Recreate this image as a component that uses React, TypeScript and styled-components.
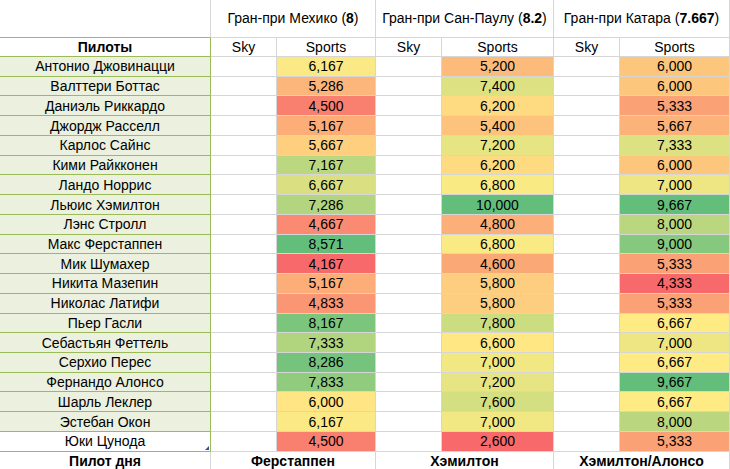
import styled, { createGlobalStyle } from "styled-components";

const GlobalStyle = createGlobalStyle`
  html, body {
    margin: 0;
    padding: 0;
    background: #ffffff;
  }
  body {
    font-family: "Liberation Sans", Arial, sans-serif;
    color: #000;
  }
`;

const GRID = "#d6d6d6";
const GREEN_LINE = "#9bbb59";
const NAME_FILL = "#ebf1de";

type Row = [string, number, number, number];

const drivers: Row[] = [
  ["Антонио Джовинацци", 6.167, 5.2, 6.0],
  ["Валттери Боттас", 5.286, 7.4, 6.0],
  ["Даниэль Риккардо", 4.5, 6.2, 5.333],
  ["Джордж Расселл", 5.167, 5.4, 5.667],
  ["Карлос Сайнс", 5.667, 7.2, 7.333],
  ["Кими Райкконен", 7.167, 6.2, 6.0],
  ["Ландо Норрис", 6.667, 6.8, 7.0],
  ["Льюис Хэмилтон", 7.286, 10.0, 9.667],
  ["Лэнс Стролл", 4.667, 4.8, 8.0],
  ["Макс Ферстаппен", 8.571, 6.8, 9.0],
  ["Мик Шумахер", 4.167, 4.6, 5.333],
  ["Никита Мазепин", 5.167, 5.8, 4.333],
  ["Николас Латифи", 4.833, 5.8, 5.333],
  ["Пьер Гасли", 8.167, 7.8, 6.667],
  ["Себастьян Феттель", 7.333, 6.6, 7.0],
  ["Серхио Перес", 8.286, 7.0, 6.667],
  ["Фернандо Алонсо", 7.833, 7.2, 9.667],
  ["Шарль Леклер", 6.0, 7.6, 6.667],
  ["Эстебан Окон", 6.167, 7.0, 8.0],
  ["Юки Цунода", 4.5, 2.6, 5.333],
];

const races = [
  { name: "Гран-при Мехико", score: "8", winner: "Ферстаппен" },
  { name: "Гран-при Сан-Паулу", score: "8.2", winner: "Хэмилтон" },
  { name: "Гран-при Катара", score: "7.667", winner: "Хэмилтон/Алонсо" },
];

const RED = [248, 105, 107];
const YELLOW = [255, 235, 132];
const GREEN = [99, 190, 123];

const mix = (a: number[], b: number[], t: number) =>
  `rgb(${a.map((v, i) => Math.round(v + (b[i] - v) * t)).join(",")})`;

// excel-like 3 colour scale: min / 50th percentile / max
const scale = (values: number[]) => {
  const sorted = [...values].sort((a, b) => a - b);
  const min = sorted[0];
  const max = sorted[sorted.length - 1];
  const n = sorted.length;
  const mid = n % 2 ? sorted[(n - 1) / 2] : (sorted[n / 2 - 1] + sorted[n / 2]) / 2;
  return (v: number) => {
    if (v <= mid) return mix(RED, YELLOW, mid === min ? 1 : (v - min) / (mid - min));
    return mix(YELLOW, GREEN, max === mid ? 1 : (v - mid) / (max - mid));
  };
};

const fmt = (v: number) => v.toFixed(3).replace(".", ",");

const Sheet = styled.div`
  display: grid;
  grid-template-columns: 211px 66px 99px 66px 112px 66px 110px;
  grid-template-rows: 38px 19px repeat(20, 19.74px) 18px;
  width: 730px;
  height: 469px;
  overflow: hidden;
  font-size: 14px;
  line-height: 1;
`;

const Cell = styled.div<{ $span?: number; $fill?: string; $green?: boolean; $bold?: boolean; $noBottom?: boolean }>`
  position: relative;
  box-sizing: border-box;
  display: flex;
  align-items: center;
  justify-content: center;
  white-space: nowrap;
  grid-column: span ${(p) => p.$span || 1};
  background: ${(p) => p.$fill || "#fff"};
  border-right: 1px solid ${(p) => (p.$green ? GREEN_LINE : GRID)};
  border-bottom: ${(p) => (p.$noBottom ? "none" : `1px solid ${p.$green ? GREEN_LINE : GRID}`)};
  font-weight: ${(p) => (p.$bold ? 700 : 400)};
`;

const Corner = styled(Cell)`
  border-bottom: 1px solid ${GREEN_LINE};
`;

const RaceTitle = styled(Cell)`
  padding-bottom: 1px;
  b {
    font-weight: 700;
  }
`;

const Handle = styled.span`
  position: absolute;
  right: 1px;
  bottom: 1px;
  width: 0;
  height: 0;
  border-left: 4px solid transparent;
  border-bottom: 4px solid #2b5797;
`;

const Footer = styled(Cell)`
  padding-top: 1px;
`;

export default function App() {
  const colours = [1, 2, 3].map((k) => scale(drivers.map((d) => d[k] as number)));

  return (
    <>
      <GlobalStyle />
      <Sheet>
        <Corner $green={false} $noBottom={false} />
        {races.map((r) => (
          <RaceTitle key={r.name} $span={2}>
            {r.name}&nbsp;(<b>{r.score}</b>)
          </RaceTitle>
        ))}

        <Cell $green $bold>
          Пилоты
        </Cell>
        {races.map((r) => [
          <Cell key={r.name + "sky"}>Sky</Cell>,
          <Cell key={r.name + "sports"}>Sports</Cell>,
        ])}

        {drivers.map((d, i) => {
          const last = i === drivers.length - 1;
          return [
            <Cell key={d[0]} $green $fill={last ? "#fff" : NAME_FILL}>
              {d[0]}
              {last && <Handle />}
            </Cell>,
            ...[1, 2, 3].map((k) => [
              <Cell key={d[0] + k + "sky"} />,
              <Cell key={d[0] + k} $fill={colours[k - 1](d[k] as number)}>
                {fmt(d[k] as number)}
              </Cell>,
            ]),
          ];
        })}

        <Footer $bold $noBottom>
          Пилот дня
        </Footer>
        {races.map((r) => (
          <Footer key={r.name + "win"} $span={2} $bold $noBottom>
            {r.winner}
          </Footer>
        ))}
      </Sheet>
    </>
  );
}
